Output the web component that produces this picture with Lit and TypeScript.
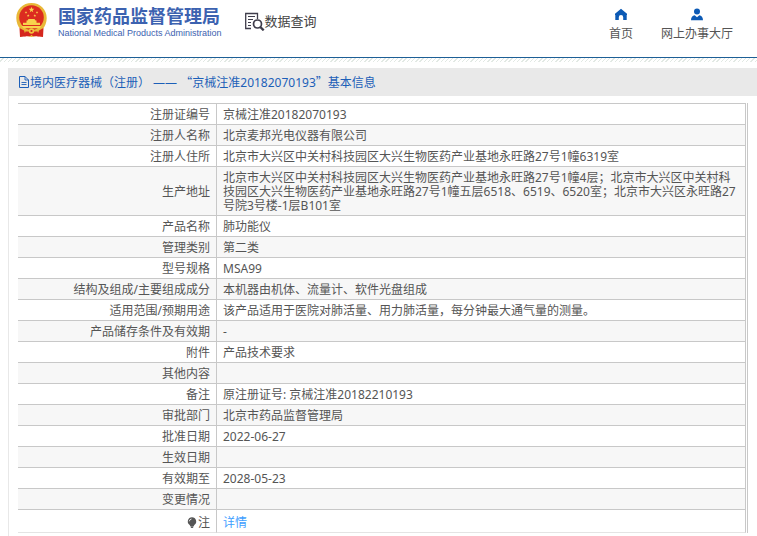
import { LitElement, html, css, svg } from "lit";
import { customElement, property } from "lit/decorators.js";

interface Row {
  label: string;
  value: string;
}

const ROWS: Row[] = [
  { label: "注册证编号", value: "京械注准20182070193" },
  { label: "注册人名称", value: "北京麦邦光电仪器有限公司" },
  { label: "注册人住所", value: "北京市大兴区中关村科技园区大兴生物医药产业基地永旺路27号1幢6319室" },
  {
    label: "生产地址",
    value:
      "北京市大兴区中关村科技园区大兴生物医药产业基地永旺路27号1幢4层；北京市大兴区中关村科技园区大兴生物医药产业基地永旺路27号1幢五层6518、6519、6520室；北京市大兴区永旺路27号院3号楼-1层B101室",
  },
  { label: "产品名称", value: "肺功能仪" },
  { label: "管理类别", value: "第二类" },
  { label: "型号规格", value: "MSA99" },
  { label: "结构及组成/主要组成成分", value: "本机器由机体、流量计、软件光盘组成" },
  { label: "适用范围/预期用途", value: "该产品适用于医院对肺活量、用力肺活量，每分钟最大通气量的测量。" },
  { label: "产品储存条件及有效期", value: "-" },
  { label: "附件", value: "产品技术要求" },
  { label: "其他内容", value: "" },
  { label: "备注", value: "原注册证号: 京械注准20182210193" },
  { label: "审批部门", value: "北京市药品监督管理局" },
  { label: "批准日期", value: "2022-06-27" },
  { label: "生效日期", value: "" },
  { label: "有效期至", value: "2028-05-23" },
  { label: "变更情况", value: "" },
];

const star = (cx: number, cy: number, r: number) => {
  const pts: string[] = [];
  for (let i = 0; i < 10; i++) {
    const a = -Math.PI / 2 + (i * Math.PI) / 5;
    const k = i % 2 ? r * 0.42 : r;
    pts.push(`${(cx + k * Math.cos(a)).toFixed(2)},${(cy + k * Math.sin(a)).toFixed(2)}`);
  }
  return svg`<polygon points=${pts.join(" ")} fill="#fbd24a"></polygon>`;
};

@customElement("site-header")
export class SiteHeader extends LitElement {
  static styles = css`
    :host {
      display: block;
    }
    .bar {
      display: flex;
      align-items: flex-start;
      height: 57px;
      padding: 0 24px 0 15px;
      box-sizing: border-box;
      background: #fff;
    }
    .rule {
      height: 5px;
      box-sizing: border-box;
      border-top: 1px solid #1d5f96;
      background: repeating-linear-gradient(135deg, #fff 0 2px, #e2e9e4 2px 3px);
    }
    .emblem {
      display: block;
      flex: none;
      margin-top: 2px;
    }
    .brand {
      display: flex;
      flex-direction: column;
      margin: 6px 0 0 10px;
      color: #3c62b0;
      white-space: nowrap;
    }
    .name {
      font-size: 18px;
      line-height: 20px;
      font-weight: 700;
    }
    .english {
      font-family: "Liberation Sans", sans-serif;
      font-size: 9px;
      line-height: 14px;
    }
    .query {
      display: flex;
      align-items: center;
      margin: 11px 0 0 22px;
      color: #444;
      font-size: 13px;
      line-height: 20px;
      white-space: nowrap;
    }
    .query svg {
      display: block;
    }
    nav {
      display: flex;
      gap: 28px;
      margin: 8px 0 0 auto;
    }
    a {
      display: flex;
      flex-direction: column;
      align-items: center;
      gap: 5px;
      color: #555;
      font-size: 12px;
      line-height: 16px;
      text-decoration: none;
      white-space: nowrap;
    }
    a svg {
      display: block;
    }
  `;

  render() {
    return html`
      <header>
        <div class="bar">
          <svg class="emblem" width="33" height="36" viewBox="0 0 33 36" aria-hidden="true">
            <path
              d="M16.5 1C25 1 31.7 7.3 31.7 16c0 4.800-1.600 8.300-4.200 11.300L28 34.500l-6-.8-5.500 1.300-5.500-1.300-6 .8.500-7.200C2.900 24.300 1.300 20.800 1.300 16 1.300 7.300 8 1 16.500 1z"
              fill="#e9b838"
            ></path>
            <circle cx="16.500" cy="15.500" r="12.300" fill="#dc2b20"></circle>
            <path d="M4.500 26l4.500 2.500 2 5.800-6 .7zM28.500 26L24 28.500l-2 5.800 6 .7z" fill="#d5261e"></path>
            <path d="M10.500 29.500h12l1.500 4.700H18l-1.500-1.400-1.500 1.400H9z" fill="#d5261e"></path>
            <path
              d="M12.500 18.500l1-1.500h6l1 1.500h1v2.200h3.500v2.300H8v-2.300h3.500v-2.200zM6.500 24h20l-2 2.300h-16z"
              fill="#f8d24c"
            ></path>
            <circle cx="16.500" cy="29" r="2.700" fill="#f3c63f"></circle>
            <circle cx="16.500" cy="29" r="1.100" fill="#d5261e"></circle>
            ${star(16.5, 7.8, 3)} ${star(11, 10.4, 1.4)} ${star(22, 10.4, 1.4)} ${star(13.2, 13.6, 1.4)}
            ${star(19.8, 13.6, 1.4)}
          </svg>
          <div class="brand">
            <span class="name">国家药品监督管理局</span>
            <span class="english">National Medical Products Administration</span>
          </div>
          <div class="query">
            <svg width="21" height="20" viewBox="2 0 21 20" fill="none" stroke="#3f3d4b" aria-hidden="true">
              <path d="M9 17.500H3.700V2.500h11.800V8" stroke-width="1.300"></path>
              <path d="M6 5.500h7M6 8.500h5M6 11.500h3M6 14.500h3" stroke-width="1.100"></path>
              <circle cx="15.500" cy="13" r="4" stroke-width="1.700"></circle>
              <path d="M18.300 16l3.400 3.400" stroke-width="2.300"></path>
            </svg>
            <span>数据查询</span>
          </div>
          <nav>
            <a href="#home">
              <svg width="14" height="13" viewBox="0 0 14 13" fill="#0c5ab5" aria-hidden="true">
                <path d="M7 .8l6 5V7h-.3v5H9.200V9.200a2.200 2.200 0 0 0-4.400 0V12H1.300V7H1V5.800z"></path>
              </svg>
              <span>首页</span>
            </a>
            <a href="#hall">
              <svg width="14" height="13" viewBox="0 0 14 13" fill="#0c5ab5" aria-hidden="true">
                <circle cx="7" cy="3.600" r="3"></circle>
                <path d="M1 12.300c0-2.900 1.500-4.800 3.700-5.100L7 9.200l2.300-2c2.200.3 3.700 2.200 3.700 5.100z"></path>
              </svg>
              <span>网上办事大厅</span>
            </a>
          </nav>
        </div>
        <div class="rule"></div>
      </header>
    `;
  }
}

@customElement("record-table")
export class RecordTable extends LitElement {
  @property({ attribute: false }) rows: Row[] = [];

  static styles = css`
    :host {
      display: block;
    }
    table {
      width: 100%;
      box-sizing: border-box;
      border-collapse: separate;
      border-spacing: 0;
      border: 0 solid #c8c8c8;
      border-right-width: 1px;
      padding-right: 1px;
      font-size: 12px;
      line-height: 14px;
      color: #555;
    }
    th,
    td {
      padding: 4px 6px 2px;
      height: 14px;
      border-top: 1px solid #c8c8c8;
      font-weight: 400;
      vertical-align: middle;
    }
    th {
      width: 186px;
      text-align: right;
    }
    td {
      border-left: 1px solid #c8c8c8;
      border-right: 1px solid #c8c8c8;
      text-align: left;
    }
    tr:nth-child(even) {
      background: #f7f7f7;
    }
    .note th,
    .note td {
      padding: 6px 6px 2px;
      border-bottom: 1px solid #e4e4e4;
    }
    .bulb {
      display: inline-block;
      vertical-align: -1px;
      margin-right: 1px;
    }
    a {
      color: #409eff;
      text-decoration: none;
    }
  `;

  render() {
    return html`
      <table>
        <tbody>
          ${this.rows.map(
            (r) => html`<tr>
              <th scope="row">${r.label}</th>
              <td>${r.value}</td>
            </tr>`,
          )}
          <tr class="note">
            <th scope="row">
              <svg class="bulb" width="10" height="11" viewBox="0 0 10 11" aria-hidden="true">
                <path d="M5 .3a4.200 4.200 0 0 1 2.300 7.700L6.800 9H3.200L2.700 8A4.200 4.200 0 0 1 5 .3z" fill="#555"></path>
                <path d="M3.500 9.300h3v.7L5.700 11H4.300l-.8-1z" fill="#555"></path>
                <path d="M2.300 4.300A2.600 2.600 0 0 1 4.500 2" fill="none" stroke="#fff" stroke-width=".8"></path></svg
              >注
            </th>
            <td><a href="#detail">详情</a></td>
          </tr>
        </tbody>
      </table>
    `;
  }
}

@customElement("app-root")
export class AppRoot extends LitElement {
  static styles = css`
    :host {
      display: flex;
      flex-direction: column;
      min-height: 100vh;
      background: #fff;
      font-family: "Noto Sans", "Noto Sans CJK SC", sans-serif;
    }
    main {
      flex: 1;
      margin: 6px 0 0 8px;
      border-left: 1px solid #e8e8e8;
    }
    h1 {
      display: flex;
      align-items: center;
      margin: 0 0 7px;
      padding: 0 10px;
      height: 28px;
      background: #e9e9e9;
      color: #1c5fb8;
      font-size: 12px;
      line-height: 16px;
      font-weight: 400;
      white-space: nowrap;
    }
    .doc {
      display: block;
      margin-right: 1px;
    }
    .quote {
      font-family: "Noto Sans CJK SC", sans-serif;
    }
    record-table {
      margin: 0 9px;
    }
  `;

  render() {
    return html`
      <site-header></site-header>
      <main>
        <h1>
          <svg class="doc" width="10" height="12" viewBox="0 0 10 12" fill="none" stroke="#1c5fb8" aria-hidden="true">
            <path d="M.5.500h5.500l3.500 3.500v7.500H.5z"></path>
            <path d="M6 .5V4h3.500M2.500 6.500h5M2.500 8.500h5" stroke-width=".9"></path>
          </svg>
          <span
            >境内医疗器械（注册） —— <span class="quote">“</span>京械注准20182070193<span class="quote">”</span
            >基本信息</span
          >
        </h1>
        <record-table .rows=${ROWS}></record-table>
      </main>
    `;
  }
}
